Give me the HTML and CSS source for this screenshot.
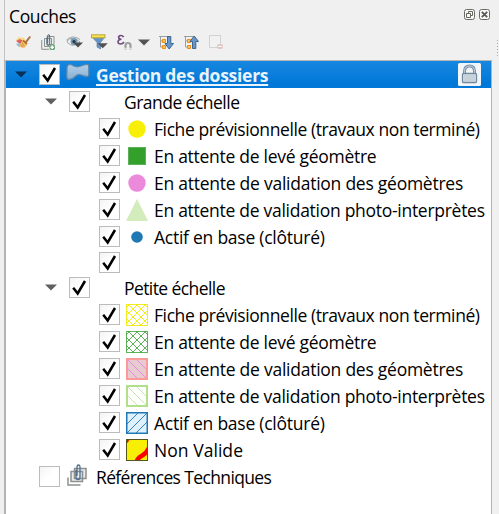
FILE: index.html
```
<!DOCTYPE html>
<html lang="fr">
<head>
<meta charset="utf-8">
<title>Couches</title>
<link rel="stylesheet" href="styles.css">
</head>
<body>
<svg width="0" height="0" class="defs">
  <defs>
    <linearGradient id="cbg" x1="0" y1="0" x2="1" y2="1"><stop offset="0" stop-color="#f3f3f3"/><stop offset=".5" stop-color="#fff"/></linearGradient>
    <linearGradient id="poly" x1="0" y1="0" x2="0" y2="1"><stop offset="0" stop-color="#b5d0e8"/><stop offset="1" stop-color="#86aed2"/></linearGradient>
    <symbol id="box" viewBox="0 0 21 21"><rect x=".5" y=".5" width="20" height="20" fill="url(#cbg)" stroke="#bcbcbc"/></symbol>
    <symbol id="check" viewBox="0 0 21 21"><use href="#box"/><path d="M4.200 10.700 8.700 16.500 16 4" fill="none" stroke="#000" stroke-width="2.500"/></symbol>
    <symbol id="cross" viewBox="0 0 22 22"><path d="M0 4l4-4M0 12L12 0M0 20L20 0M6 22L22 6M14 22l8-8M18 0l4 4M10 0l12 12M2 0l20 20M0 6l16 16M0 14l8 8" fill="none" stroke-width=".9"/></symbol>
  </defs>
</svg>
<div class="dock">
  <header class="title"><h1>Couches</h1>
    <div class="buttons">
      <svg width="11" height="11" viewBox="0 0 11 11"><rect x=".5" y=".5" width="10" height="10" rx="2" fill="#f8f8f6" stroke="#6b6b66"/><path d="M4.500 4V2.500h4v4H7M2.500 4.500h4v4h-4z" fill="none" stroke="#66665f"/></svg>
      <svg width="11" height="11" viewBox="0 0 11 11"><rect x=".5" y=".5" width="10" height="10" rx="2" fill="#f8f8f6" stroke="#6b6b66"/><path d="M2.800 2.800l5.400 5.400M8.200 2.800L2.800 8.200" stroke="#5c5c56" stroke-width="1.900"/></svg>
    </div>
  </header>
  <nav class="tools">
    <svg class="t1" width="16" height="16" viewBox="0 0 16 16"><path d="M0 6l3-3 5 1 2 4-5 3z" fill="#f6dc80"/><path d="M0 7l4-2 3 2-3 3z" fill="#df5f62"/><path d="M0 10l4-1 3 3-4 1z" fill="#8db8e6"/><path d="M6.500 6l4.500 4q-1 4-4 4-3-.5-4.500-3 2.500-1 4-5z" fill="#efbd62"/><path d="M6 9l2 3M4.500 10.500l2 2.500" stroke="#d58f45"/><path d="M9 7.500l4.500-5.500 1.500 1-4.500 6z" fill="#a87548"/><path d="M7 6.300l4 3.700" stroke="#b46a31" stroke-width="1.700"/></svg>
    <svg class="t2" width="15" height="17" viewBox="0 0 15 17"><path d="M.7 6v9.300H8M3.500 4.500h7v8h-7zM6 2.500h7v8H6z" fill="#eceeed" stroke="#8d9290"/><path d="M6 4v6q0 1.500 1.300 1.500T8.700 10V2q0-1.300-1-1.300t-1 1.300v7" fill="none" stroke="#466786"/><rect x="8.500" y="10.500" width="5.500" height="5.500" rx="1.500" fill="#71a879"/><path d="M11.250 11.600v3.300M9.600 13.250h3.300" stroke="#fff" stroke-width="1.500"/></svg>
    <svg class="t3" width="18" height="14" viewBox="0 0 18 14"><path d="M1 6q6-6 13 1-7 6-12 1z" fill="#f4f6f6" stroke="#9ba2a7"/><circle cx="8" cy="6.500" r="3.500" fill="#7299b5"/><circle cx="8" cy="6.500" r="1.600" fill="#25313a"/><path d="M.5 5Q7-1 14 4.500" fill="none" stroke="#a3a6a8"/><path d="M7 7.500h10l-5 5z" fill="#4c4c4c"/></svg>
    <svg class="t4" width="17" height="17" viewBox="0 0 17 17"><path d="M1 3h13L9.500 8.500V15L6 13V8.500z" fill="#6594c8" stroke="#6284aa" stroke-width=".7"/><rect x=".5" y=".8" width="13.500" height="3" fill="#fbe34c" stroke="#b8a742"/><path d="M6.500 9.300h10.300l-5.100 5z" fill="#525252"/></svg>
    <svg class="t5" width="15" height="17" viewBox="0 0 15 17"><path d="M6.700 3.200Q5.700 1.500 3.700 1.500C.8 1.500.8 5.300 4.500 5.300.2 5.300-.2 10 3.500 10q2.300 0 3.500-2" fill="none" stroke="#714b7d" stroke-width="1.600"/><path d="M8.500 15.500v-4q0-2.500 2.500-2.500t2.500 2.500v4" fill="none" stroke="#9b9f9b" stroke-width="2.200"/><path d="M7 14.500h3M12 14.500h3" stroke="#dedfdd" stroke-width="1.500"/></svg>
    <svg class="t6" width="12" height="7" viewBox="0 0 12 7"><path d="M0 .5h12l-6 6z" fill="#555"/></svg>
    <svg class="t7" width="15" height="15" viewBox="0 0 15 15"><path d="M0 1.500h10M1.500 2v10M1.500 6H4M1.500 12H4" stroke="#9aa09d"/><path d="M3.500 4.500h3v3h-3zM3.500 10.500h3v3h-3z" fill="#ffc457" stroke="#ee8d1a"/><path d="M8.500 1.500h3.300v7h2.700L10.200 14 6 8.500h2.500z" fill="#6698cc" stroke="#3f668f"/></svg>
    <svg class="t8" width="15" height="15" viewBox="0 0 15 15"><path d="M0 1.500h10M1.500 2v10M1.500 6H4M1.500 12H4" stroke="#9aa09d"/><path d="M3.500 4.500h3v3h-3zM3.500 10.500h3v3h-3z" fill="#ffc457" stroke="#ee8d1a"/><path d="M8.500 13.500h3.300v-7h2.700L10.200 1 6 6.500h2.500z" fill="#6698cc" stroke="#3f668f"/></svg>
    <svg class="t9" width="15" height="15" viewBox="0 0 15 15"><rect x=".5" y=".5" width="11" height="12" fill="#f1f1f1" stroke="#d2d2d2"/><rect x="8" y="9" width="6" height="5" rx="2" fill="#e0c8c8"/><path d="M9.300 11.500h3.400" stroke="#fff"/></svg>
  </nav>
  <span class="grip"></span>
  <main class="tree">
    <div class="row sel">
      <svg class="arrow" width="12" height="7"><path d="M0 .5h12l-6 6z" fill="#0a3157"/></svg>
      <svg class="cb"><use href="#check"/></svg>
      <svg class="layer" width="24" height="18" viewBox="0 0 24 18"><path d="M1 4Q2 .8 5 1.500q5 3.500 10 1.500 4-2 7-1.500 1 1 .8 5.500v4q-.2 3-2.500 2.500-3-.5-5-1.500-3-1-5.500 1-2.500 3-6.500 3.500Q.8 17 .8 13z" fill="url(#poly)" stroke="#5a87ae" stroke-width="1.300"/></svg>
      <span class="label">Gestion des dossiers</span>
      <svg class="lock" width="23" height="23" viewBox="0 0 23 23"><rect width="23" height="23" rx="1.500" fill="#f3f6f9"/><path d="M6.500 11V8.500q0-5.500 5-5.500t5 5.500V11" fill="none" stroke="#788fa5" stroke-width="3"/><path d="M6.500 11V8.500q0-5.500 5-5.500t5 5.500V11" fill="none" stroke="#cad6e0"/><rect x="4.500" y="10.500" width="14" height="9" rx="1" fill="#dae2e9" stroke="#71899f" stroke-width="1.300"/><path d="M6 13h11M6 15h11M6 17h11" stroke="#b4c2ce"/></svg>
    </div>
    <div class="row grp"><svg class="arrow" width="12" height="7"><path d="M0 .5h12l-6 6z" fill="#606060"/></svg><svg class="cb"><use href="#check"/></svg><span class="label g1">Grande échelle</span></div>
    <div class="row leaf"><svg class="cb"><use href="#check"/></svg><svg class="sym"><circle cx="11" cy="11" r="8.700" fill="#f7ef05"/></svg><span class="label l1">Fiche prévisionnelle (travaux non terminé)</span></div>
    <div class="row leaf"><svg class="cb"><use href="#check"/></svg><svg class="sym"><rect x="2.500" y="2.500" width="17" height="17" fill="#33a02c" stroke="#5fae59"/></svg><span class="label l2">En attente de levé géomètre</span></div>
    <div class="row leaf"><svg class="cb"><use href="#check"/></svg><svg class="sym"><circle cx="11" cy="11" r="8.700" fill="#eb8adb"/></svg><span class="label l3">En attente de validation des géomètres</span></div>
    <div class="row leaf"><svg class="cb"><use href="#check"/></svg><svg class="sym"><path d="M11 0l11 22H0z" fill="#d2ecbb"/></svg><span class="label l4">En attente de validation photo-interprètes</span></div>
    <div class="row leaf"><svg class="cb"><use href="#check"/></svg><svg class="sym"><circle cx="11" cy="11" r="5.800" fill="#1f78b4"/></svg><span class="label l5">Actif en base (clôturé)</span></div>
    <div class="row leaf blank"><svg class="cb"><use href="#check"/></svg></div>
    <div class="row grp"><svg class="arrow" width="12" height="7"><path d="M0 .5h12l-6 6z" fill="#606060"/></svg><svg class="cb"><use href="#check"/></svg><span class="label g2">Petite échelle</span></div>
    <div class="row leaf"><svg class="cb"><use href="#check"/></svg><svg class="sym"><rect x=".5" y=".5" width="21" height="21" fill="#fff" stroke="#f3ea2c"/><use href="#cross" stroke="#f3ea00"/></svg><span class="label l1">Fiche prévisionnelle (travaux non terminé)</span></div>
    <div class="row leaf"><svg class="cb"><use href="#check"/></svg><svg class="sym"><rect x=".5" y=".5" width="21" height="21" fill="#fff" stroke="#62b35d"/><use href="#cross" stroke="#4aa944"/></svg><span class="label l2">En attente de levé géomètre</span></div>
    <div class="row leaf"><svg class="cb"><use href="#check"/></svg><svg class="sym"><rect x="1" y="1" width="20" height="20" fill="#e8cbd0"/><path d="M2 2l18 18M2 11l9 9M11 2l9 9" stroke="#e58be0"/><rect x="1" y="1" width="20" height="20" fill="none" stroke="#fb9a99" stroke-width="2"/></svg><span class="label l3">En attente de validation des géomètres</span></div>
    <div class="row leaf"><svg class="cb"><use href="#check"/></svg><svg class="sym"><rect x="1" y="1" width="20" height="20" fill="#fff"/><path d="M2 2l18 18M2 11l9 9M11 2l9 9" stroke="#c6e7aa"/><rect x="1" y="1" width="20" height="20" fill="none" stroke="#b2df8a" stroke-width="2"/></svg><span class="label l4">En attente de validation photo-interprètes</span></div>
    <div class="row leaf"><svg class="cb"><use href="#check"/></svg><svg class="sym"><rect x=".75" y=".75" width="20.500" height="20.500" fill="#def1fc"/><path d="M1 12L12 1M1 21L21 1M10 21l11-11" stroke="#3384ba"/><rect x=".75" y=".75" width="20.500" height="20.500" fill="none" stroke="#1f78b4" stroke-width="1.500"/></svg><span class="label l5">Actif en base (clôturé)</span></div>
    <div class="row leaf"><svg class="cb"><use href="#check"/></svg><svg class="sym"><rect x=".5" y=".5" width="21" height="21" fill="#f7ef05"/><path d="M0 0h3.500Q3 3 0 5z" fill="#f00"/><path d="M10.500 23q1-4 5-6 5-2.500 7.500-8" fill="none" stroke="#f00" stroke-width="4.500"/><rect x=".5" y=".5" width="21" height="21" fill="none" stroke="#55551d"/></svg><span class="label l6">Non Valide</span></div>
    <div class="row last"><svg class="cb"><use href="#box"/></svg><svg class="gicon" width="20" height="22" viewBox="0 0 20 22"><path d="M1 13.500V21h12.500" fill="none" stroke="#8c908e" stroke-width="1.500"/><path d="M4 7.500h11.500v10H4zM7.500 4.500h11.500v10H7.500z" fill="#e9ebea" stroke="#8c908e" stroke-width="1.500"/><path d="M9 6v7.500q0 2 2 2t2-2V3.500Q13 1 11.500 1T10 3.500V12" fill="none" stroke="#4f6f91" stroke-width="1.300"/></svg><span class="label r1">Références Techniques</span></div>
  </main>
</div>
</body>
</html>
```
FILE: styles.css
```
* { box-sizing: border-box; }
body { margin: 0; background: #f0f0f0; color: #000; font-family: "Open Sans", "Noto Sans", sans-serif; overflow: hidden; }
svg { display: block; flex: none; }
.defs { position: absolute; }
.dock { position: relative; width: 499px; height: 514px; padding-left: 4px; display: flex; flex-direction: column; }
.dock::before { content: ""; position: absolute; left: 4px; top: 0; width: 1px; height: 60px; background: #c2c2c2; }
.title { height: 32px; display: flex; justify-content: space-between; padding: 0 9px 0 5px; }
h1 { margin: 0; font-size: 17.5px; font-weight: 400; line-height: 32px; letter-spacing: -.35px; }
.buttons { display: flex; gap: 4px; padding-top: 9px; }
.tools { height: 28px; display: flex; align-items: center; padding: 0 0 8px 12px; }
.t2 { margin-left: 9px; }
.t3 { margin-left: 10px; }
.t4 { margin-left: 7px; }
.t5 { margin-left: 9px; }
.t6 { margin-left: 6px; }
.t7 { margin-left: 9px; }
.t8 { margin-left: 10px; }
.t9 { margin-left: 10px; }
.grip { position: absolute; left: 497px; top: 40px; width: 1px; height: 16px; background: repeating-linear-gradient(#a8a8a8 0 1px, transparent 1px 3px); }
.tree { width: 488px; flex: 1; background: #fff; border: solid #b4b4b4; border-width: 1px 1px 0 2px; }
.row { height: 27px; display: flex; align-items: center; }
.cb { width: 21px; height: 21px; }
.sym { width: 22px; height: 22px; margin: 0 6px; }
.label { font-size: 17.5px; line-height: 27px; padding-top: 2px; white-space: nowrap; letter-spacing: -.25px; }
.sel { background: linear-gradient(#1787e0, #0078d7 85%); padding-left: 9px; padding-right: 10px; }
.sel .cb, .grp .cb { margin-left: 12px; }
.layer { margin: 0 6px; margin-top: -5px; }
.sel .label { color: #e9f3fc; font-weight: 700; letter-spacing: -.28px; text-decoration: underline; text-decoration-thickness: 2px; text-underline-offset: 2px; }
.lock { margin-left: auto; }
.grp { padding-left: 39px; }
.grp .label { margin-left: 34px; }
.leaf { padding-left: 93px; }
.blank { height: 24px; padding-top: 2px; align-items: flex-start; }
.last { padding-left: 33px; }
.gicon { margin: -3px 9px 0 7px; }
.g1 { letter-spacing: -.53px; }
.g2 { letter-spacing: -.58px; }
.l1 { letter-spacing: -.41px; }
.l2, .l4 { letter-spacing: -.28px; }
.l6 { letter-spacing: .05px; }
.r1 { letter-spacing: -.63px; }
```
